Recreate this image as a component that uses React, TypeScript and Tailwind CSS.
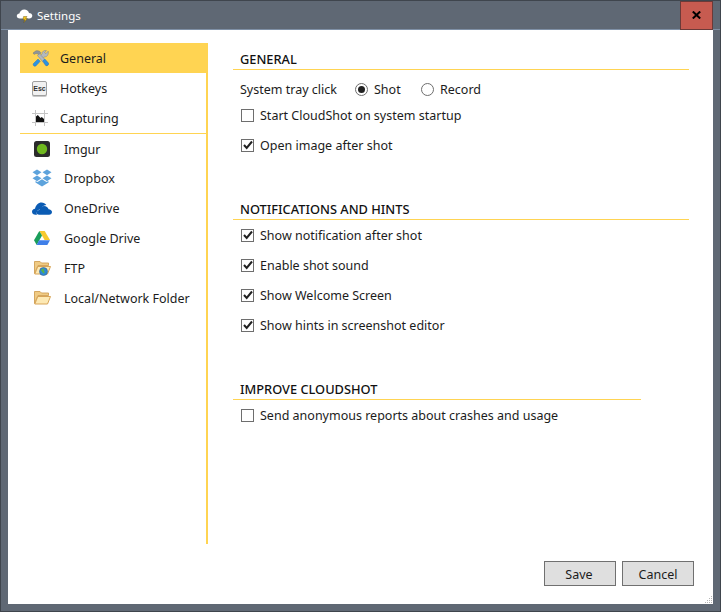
import React from "react";

function Cloud() {
  return (
    <svg width="17" height="15" viewBox="0 0 17 15">
      <path d="M4 10.500C1.800 10.500.8 9.300.8 8c0-1.400 1.200-2.400 2.600-2.400C3.800 3.200 5.800 1.500 8.300 1.500c2.300 0 4.200 1.500 4.700 3.500 1.900 0 3.300 1.200 3.300 2.800 0 1.600-1.300 2.700-3 2.700z" fill="#fff" />
      <path d="M7.500 8.500H11l-1.300 2h1.800L7.800 14.500l1-2.800H7z" fill="#f5c518" stroke="#5b4a10" strokeWidth=".4" />
    </svg>
  );
}
function Tools() {
  return (
    <svg width="17" height="17" viewBox="0 0 17 17">
      <path d="M1 3 4 .8c2.200-.5 4 .4 5 2L7.300 5 5 3.500 3 3.800 2.300 4.500z" fill="#8f959b" stroke="#70767c" strokeWidth=".5" />
      <path d="M16.200 1.200 14 3.600l-1.500-1L14.500.6c-2.200-.7-4.600.8-4.500 3.400L7.500 6.500l2.800 2.800 2.200-2.500c2.500.4 4.400-2.400 3.700-5.600z" fill="#b4b9be" stroke="#7b8187" strokeWidth=".5" />
      <path d="M6 9 8.300 11.300 3.800 16c-1.300 1.100-3.500-1-2.400-2.400z" fill="#2b93e2" stroke="#1f6fb0" strokeWidth=".4" />
      <path d="M5.500 5.500 7.500 3.800l8.800 9.200c1 1.500-1 3.400-2.500 2.500z" fill="#b4b9be" stroke="#7b8187" strokeWidth=".5" />
      <path d="M10.800 10.800 12.800 9.100l3.500 3.900c1 1.500-1 3.400-2.500 2.500z" fill="#2b93e2" stroke="#1f6fb0" strokeWidth=".4" />
    </svg>
  );
}
function EscKey() {
  return (
    <div className="flex h-[15px] w-[15px] items-center justify-center rounded-[2px] border border-[#a0a0a0] bg-[#f1f1f1] text-[7px] font-bold leading-none text-[#333] shadow-[0_1px_0_#c8c8c8] [font-family:'Liberation_Sans',sans-serif]">
      Esc
    </div>
  );
}
function Capture() {
  return (
    <svg width="16" height="16" viewBox="0 0 16 16">
      <path d="M3.500 0v16M12.500 0v16M0 3.500h16M0 12.500h16" stroke="#c4c4c4" strokeWidth="1" />
      <rect x="4" y="4" width="8" height="8" fill="#fff" />
      <path d="M4 12V6.500L5.800 5l2.700 3 1.300-1L12 9v3z" fill="#111" />
    </svg>
  );
}
function Imgur() {
  return (
    <svg width="16" height="16" viewBox="0 0 16 16">
      <rect width="16" height="16" rx="2.500" fill="#2b2b2b" />
      <circle cx="8" cy="8" r="5.200" fill="#6fb81e" />
    </svg>
  );
}
function Dropbox() {
  return (
    <svg width="20" height="18" viewBox="0 0 20 18" fill="#5da3dc">
      <path d="M5 .5 9.500 3.300 5 6.200.5 3.300z" />
      <path d="M15 .5 19.500 3.300 15 6.200 10.500 3.300z" />
      <path d="M5 6.500 9.500 9.300 5 12.200.5 9.300z" />
      <path d="M15 6.500 19.500 9.300 15 12.200 10.500 9.300z" />
      <path d="M10 10.200l4.500 2.900 2-1.200v1.700L10 17.500l-6.500-3.900v-1.700l2 1.200z" />
    </svg>
  );
}
function OneDrive() {
  return (
    <svg width="20" height="13" viewBox="0 0 20 13">
      <path d="M3.500 12.800C1.500 12.800 0 11.500 0 9.800c0-1.700 1.300-2.900 3-3C3.700 3 6.400.5 9.500.5c2 0 3.800 1 4.800 2.500-3 .2-4.800 1.900-5.500 4.200C6 7.200 4 9.500 5 12.800z" fill="#0b5cb4" />
      <path d="M7 12.800c-1.300 0-2.300-1-2.300-2.300 0-1.400 1.100-2.400 2.600-2.400.5-2.600 2.500-4.200 4.800-4.200 2.200 0 4 1.400 4.500 3.300 1.900.2 3.400 1.300 3.400 2.900 0 1.500-1.200 2.700-3 2.700z" fill="#0b5cb4" />
    </svg>
  );
}
function GDrive() {
  return (
    <svg width="16" height="14" viewBox="0 0 16 14">
      <path d="M5.300 0h5.400l5.300 9h-5.400z" fill="#f7c92e" />
      <path d="M5.300 0 8 4.600 2.700 14 0 9.200z" fill="#1a9e5a" />
      <path d="M5 9.200h11L13.300 14H2.600z" fill="#3f7fe8" />
    </svg>
  );
}
function Folder({ globe }: { globe?: boolean }) {
  return (
    <svg width="17" height="16" viewBox="0 0 17 16">
      <path d="M.5 13.500V1.500h5.500l1.500 1.500h7v2.500H4z" fill="#f0cb84" stroke="#cf9f55" strokeWidth=".9" />
      <path d="M.8 14 3.800 6.500h12.700l-3 7.500z" fill="#fde9b4" stroke="#d8a558" strokeWidth="1" />
      {globe && (
        <>
          <circle cx="9.500" cy="11.500" r="4" fill="#2d88d6" stroke="#35618c" strokeWidth=".6" />
          <path d="M7 10.300c.9-1.300 2.400-1.700 3.400-1.300-.4.9-.8 1.100-.4 2.100.8.400.8 1.300 0 2.500-1-.2-1.300-1.300-1.900-1.800-.4-.5-.7-.9-1.100-1.500z" fill="#58b347" />
        </>
      )}
    </svg>
  );
}

function Check({ on }: { on?: boolean }) {
  return (
    <span className="flex h-[13px] w-[13px] shrink-0 items-center justify-center border border-[#6e6e6e] bg-white">
      {on && (
        <svg width="10" height="10" viewBox="0 0 10 10">
          <path d="M1 5l2.700 3L9 1.500" fill="none" stroke="#222" strokeWidth="2" />
        </svg>
      )}
    </span>
  );
}
function Radio({ on }: { on?: boolean }) {
  return (
    <span className="flex h-[13px] w-[13px] shrink-0 items-center justify-center rounded-full border border-[#6e6e6e] bg-white">
      {on && <span className="h-[7px] w-[7px] rounded-full bg-[#222]" />}
    </span>
  );
}
function CheckRow({ on, label }: { on?: boolean; label: string }) {
  return (
    <div className="flex h-[30px] items-center gap-[6px] pl-2">
      <Check on={on} />
      <span className="pt-[2px]">{label}</span>
    </div>
  );
}
function Title({ text, narrow, first }: { text: string; narrow?: boolean; first?: boolean }) {
  return (
    <div
      className={`h-[21px] border-b border-[#ffd452] pl-[7px] text-[12.8px] font-medium leading-[20px] text-[#111] ${narrow ? "w-[408px]" : "w-[456px]"} ${first ? "" : "mt-[39px]"}`}
    >
      {text}
    </div>
  );
}
function NavRow({ icon, label, active, wide, short }: { icon: React.ReactNode; label: string; active?: boolean; wide?: boolean; short?: boolean }) {
  return (
    <div className={`flex items-center pl-3 ${short ? "h-[29px] pt-px" : "h-[30px]"} ${active ? "bg-[#ffd452]" : ""}`}>
      <span className={`flex items-center ${wide ? "w-[32px]" : "w-[28px]"}`}>{icon}</span>
      <span className="pt-[2px]">{label}</span>
    </div>
  );
}
const Btn = ({ label, nudge }: { label: string; nudge?: boolean }) => (
  <div className={`flex h-[25px] w-[72px] items-center justify-center border border-[#707070] bg-[#dfdfdf] pt-[3px] ${nudge ? "pr-[2px]" : ""}`}>{label}</div>
);

export default function App() {
  return (
    <div className="flex h-[612px] w-[721px] flex-col border border-[#3f454d] bg-[#5f6874] text-[12.5px] text-[#1c1c1c] [font-family:'Noto_Sans',sans-serif]">
      <div className="flex h-[29px] shrink-0 items-center justify-between border-b border-[#7f90a6] pl-[15px] pr-[7px]">
        <div className="flex items-center gap-[4px] text-[11.5px] text-white">
          <Cloud />
          <span className="pt-[2px]">Settings</span>
        </div>
        <div className="flex h-[29px] w-[33px] items-center justify-center border border-[#6b3a38] bg-[#c75b50]">
          <svg width="9" height="8" viewBox="0 0 9 8">
            <path d="M.8.500 8.200 7.500M8.200.500.8 7.500" stroke="#000" strokeWidth="2" />
          </svg>
        </div>
      </div>
      <div className="mx-[7px] mb-[7px] flex min-h-0 flex-1 flex-col bg-white">
        <div className="flex flex-1">
          <div className="ml-3 mt-[13px] h-[501px] w-[188px] shrink-0 border-r-2 border-[#ffd452]">
            <div className="-mr-[2px]">
              <NavRow active icon={<Tools />} label="General" />
            </div>
            <NavRow icon={<EscKey />} label="Hotkeys" />
            <NavRow icon={<Capture />} label="Capturing" />
            <div className="h-px bg-[#ffd452]" />
            <NavRow short wide icon={<span className="pl-[2px]"><Imgur /></span>} label="Imgur" />
            <NavRow wide icon={<Dropbox />} label="Dropbox" />
            <NavRow wide icon={<OneDrive />} label="OneDrive" />
            <NavRow wide icon={<span className="pl-[2px]"><GDrive /></span>} label="Google Drive" />
            <NavRow wide icon={<span className="pl-[2px]"><Folder globe /></span>} label="FTP" />
            <NavRow wide icon={<span className="pl-[2px]"><Folder /></span>} label="Local/Network Folder" />
          </div>
          <div className="ml-[25px] mt-[19px] flex-1">
            <Title first text="GENERAL" />
            <div className="mt-2 flex h-[22px] items-center pl-[7px]">
              <span className="w-[115px] pt-[2px]">System tray click</span>
              <Radio on />
              <span className="ml-[6px] w-[47px] pt-[2px]">Shot</span>
              <Radio />
              <span className="ml-[6px] pt-[2px]">Record</span>
            </div>
            <CheckRow label="Start CloudShot on system startup" />
            <CheckRow on label="Open image after shot" />
            <Title text="NOTIFICATIONS AND HINTS" />
            <CheckRow on label="Show notification after shot" />
            <CheckRow on label="Enable shot sound" />
            <CheckRow on label="Show Welcome Screen" />
            <CheckRow on label="Show hints in screenshot editor" />
            <Title narrow text="IMPROVE CLOUDSHOT" />
            <CheckRow label="Send anonymous reports about crashes and usage" />
          </div>
        </div>
        <div className="relative flex h-[43px] shrink-0 justify-end gap-[6px] pr-[19px]">
          <Btn nudge label="Save" />
          <Btn label="Cancel" />
          <svg className="absolute bottom-0 right-0" width="8" height="8" viewBox="0 0 8 8" fill="#b5b5b5">
            <rect x="6" y="0" width="1" height="1" />
            <rect x="4" y="2" width="1" height="1" />
            <rect x="6" y="2" width="1" height="1" />
            <rect x="2" y="4" width="1" height="1" />
            <rect x="4" y="4" width="1" height="1" />
            <rect x="6" y="4" width="1" height="1" />
            <rect x="0" y="6" width="1" height="1" />
            <rect x="2" y="6" width="1" height="1" />
            <rect x="4" y="6" width="1" height="1" />
            <rect x="6" y="6" width="1" height="1" />
          </svg>
        </div>
      </div>
    </div>
  );
}
